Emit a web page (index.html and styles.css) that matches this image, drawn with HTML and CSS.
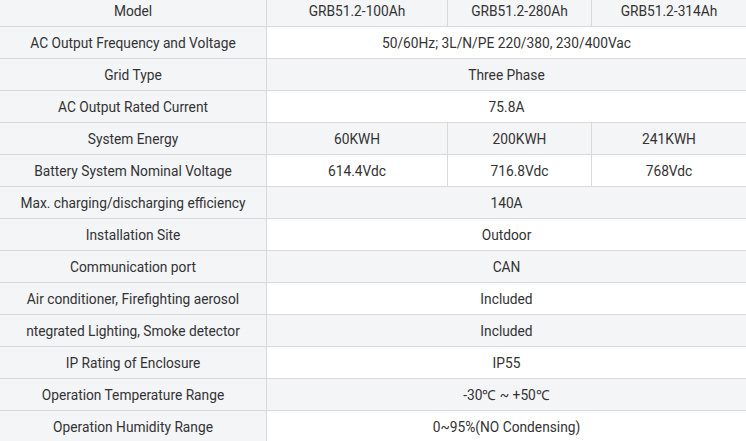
FILE: index.html
```html
<!DOCTYPE html>
<html>
<head>
<meta charset="utf-8">
<link rel="stylesheet" href="styles.css">
</head>
<body>
<table class="spec">
  <colgroup>
    <col class="c1"><col class="c2"><col class="c3"><col class="c4">
  </colgroup>
  <tbody>
    <tr><td class="label">Model</td><td>GRB51.2-100Ah</td><td>GRB51.2-280Ah</td><td class="last">GRB51.2-314Ah</td></tr>
    <tr><td class="label">AC Output Frequency and Voltage</td><td colspan="3" class="last">50/60Hz; 3L/N/PE 220/380, 230/400Vac</td></tr>
    <tr><td class="label">Grid Type</td><td colspan="3" class="last">Three Phase</td></tr>
    <tr><td class="label">AC Output Rated Current</td><td colspan="3" class="last">75.8A</td></tr>
    <tr><td class="label">System Energy</td><td>60KWH</td><td>200KWH</td><td class="last">241KWH</td></tr>
    <tr><td class="label">Battery System Nominal Voltage</td><td>614.4Vdc</td><td>716.8Vdc</td><td class="last">768Vdc</td></tr>
    <tr><td class="label">Max. charging/discharging efficiency</td><td colspan="3" class="last">140A</td></tr>
    <tr><td class="label">Installation Site</td><td colspan="3" class="last">Outdoor</td></tr>
    <tr><td class="label">Communication port</td><td colspan="3" class="last">CAN</td></tr>
    <tr><td class="label">Air conditioner, Firefighting aerosol</td><td colspan="3" class="last">Included</td></tr>
    <tr><td class="label">ntegrated Lighting, Smoke detector</td><td colspan="3" class="last">Included</td></tr>
    <tr><td class="label">IP Rating of Enclosure</td><td colspan="3" class="last">IP55</td></tr>
    <tr><td class="label">Operation Temperature Range</td><td colspan="3" class="last">-30℃ ~ +50℃</td></tr>
    <tr><td class="label">Operation Humidity Range</td><td colspan="3" class="last">0~95%(NO Condensing)</td></tr>
  </tbody>
</table>
</body>
</html>
```
FILE: styles.css
```css
html, body {
  margin: 0;
  padding: 0;
  background: #ffffff;
  overflow: hidden;
}
.spec {
  margin-top: -5px;
  width: 746px;
  table-layout: fixed;
  border-collapse: separate;
  border-spacing: 0;
  font-family: Roboto, "Liberation Sans", sans-serif;
  font-size: 13.75px;
  color: #333333;
}
.c1 { width: 267px; }
.c2 { width: 181px; }
.c3 { width: 144px; }
.c4 { width: 154px; }
.spec td {
  height: 31px;
  padding: 0;
  text-align: center;
  vertical-align: middle;
  border-right: 1px solid #d9d9d9;
  border-bottom: 1px solid #d9d9d9;
  white-space: nowrap;
  overflow: hidden;
  background: #ffffff;
}
.spec td.last { border-right: none; }
.spec tr:nth-child(odd) td { background: #f4f5f7; }
.spec td.label { background: #f4f5f7; }
.temp { word-spacing: 3px; }
```
